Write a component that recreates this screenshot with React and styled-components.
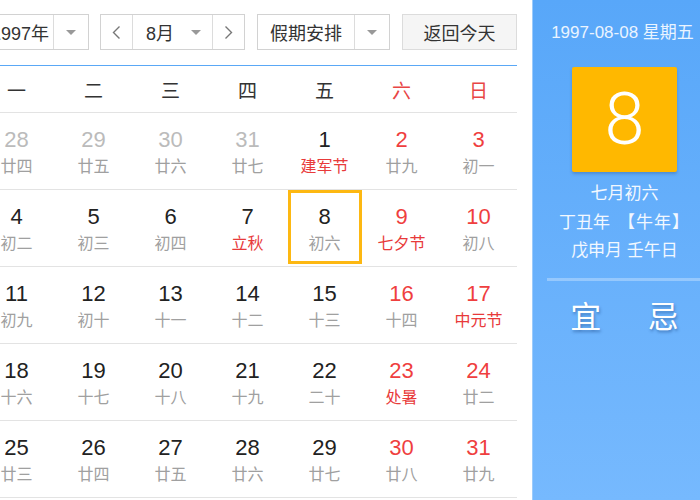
import React from 'react';
import styled, { createGlobalStyle } from 'styled-components';

const Global = createGlobalStyle`
  html, body {
    margin: 0;
    padding: 0;
    background: #fff;
    overflow: hidden;
  }
  body {
    font-family: "Liberation Sans", "Noto Sans CJK SC", sans-serif;
    color: #333;
  }
`

const Viewport = styled.div`
  width: 700px;
  height: 500px;
  overflow: hidden;
`

const Widget = styled.div`
  display: flex;
  align-items: stretch;
  margin-left: -22px;
  width: 760px;
  height: 500px;
`

const Main = styled.div`
  width: 539px;
  padding-top: 14px;
  flex-shrink: 0;
`

const Toolbar = styled.div`
  display: flex;
  height: 36px;
  margin-bottom: 15px;
`

const Select = styled.div`
  display: flex;
  width: ${p => p.w}px;
  margin-right: ${p => p.mr || 0}px;
  height: 36px;
  box-sizing: border-box;
  border: 1px solid #d2d2d2;
  background: #fff;
  font-size: 18px;
  color: #333;
`

const SelectText = styled.div`
  flex: 1;
  display: flex;
  align-items: center;
  justify-content: ${p => p.align || 'center'};
  padding-left: ${p => p.pl || 0}px;
  padding-right: ${p => p.pr || 0}px;
  white-space: nowrap;
`

const ArrowBox = styled.div`
  width: ${p => p.w}px;
  border-left: 1px solid #dcdcdc;
  display: flex;
  align-items: center;
  justify-content: center;
`

const Caret = styled.span`
  width: 0;
  height: 0;
  border-left: 5px solid transparent;
  border-right: 5px solid transparent;
  border-top: 5px solid #999;
`

const StepButton = styled.div`
  width: 31px;
  display: flex;
  align-items: center;
  justify-content: center;
  border-left: ${p => p.left ? '1px solid #dcdcdc' : 'none'};
  border-right: ${p => p.right ? '1px solid #dcdcdc' : 'none'};
`

const MonthText = styled.div`
  flex: 1;
  display: flex;
  align-items: center;
  justify-content: space-between;
  padding: 0 11px 0 13px;
`

const TodayButton = styled.div`
  width: 115px;
  height: 36px;
  box-sizing: border-box;
  border: 1px solid #dcdcdc;
  background: #f5f5f5;
  display: flex;
  align-items: center;
  justify-content: center;
  font-size: 18px;
  color: #333;
`

const Table = styled.div`
  border-top: 1px solid #5aa8f6;
`

const HeadRow = styled.div`
  display: grid;
  grid-template-columns: repeat(7, 1fr);
  height: 46px;
  border-bottom: 1px solid #e3e3e3;
`

const HeadCell = styled.div`
  display: flex;
  align-items: center;
  justify-content: center;
  font-size: 19px;
  color: ${p => p.weekend ? '#e84545' : '#333'};
`

const WeekRow = styled.div`
  display: grid;
  grid-template-columns: repeat(7, 1fr);
  height: 76px;
  border-bottom: 1px solid #e3e3e3;
`

const Cell = styled.div`
  display: flex;
  justify-content: center;
`

const DayBox = styled.div`
  width: 74px;
  height: 74px;
  box-sizing: border-box;
  border: 3px solid ${p => p.selected ? '#fdb812' : 'transparent'};
  display: flex;
  flex-direction: column;
  align-items: center;
  padding-top: 12px;
`

const DayNum = styled.div`
  font-size: 22px;
  line-height: 24px;
  color: ${p => p.tone};
`

const Lunar = styled.div`
  margin-top: 5px;
  font-size: 16px;
  line-height: 20px;
  color: ${p => p.red ? '#e83a3a' : '#a0a0a0'};
`

const Panel = styled.div`
  margin-left: 15px;
  width: 184px;
  flex-shrink: 0;
  box-sizing: border-box;
  border-left: 1px solid #9ccbfb;
  background: linear-gradient(180deg, #58a7f9 0%, #76b9fe 100%);
  display: flex;
  flex-direction: column;
  align-items: center;
  padding-top: 22px;
  color: #fff;
`

const DateLine = styled.div`
  font-size: 17px;
  line-height: 22px;
  color: #eaf4ff;
  white-space: nowrap;
  margin-left: -4px;
`

const BigDay = styled.div`
  margin-top: 23px;
  width: 105px;
  height: 105px;
  background: #ffb800;
  border-radius: 2px;
  box-shadow: 0 2px 3px rgba(40, 80, 140, 0.35);
  display: flex;
  align-items: center;
  justify-content: center;
  font-size: 72px;
  font-family: "Roboto", "Liberation Sans", sans-serif;
  font-weight: 300;
  color: #fff;
`

const LunarInfo = styled.div`
  margin-top: 8px;
  display: flex;
  flex-direction: column;
  align-items: center;
  font-size: 17px;
  line-height: 28.5px;
  color: #f2f8ff;
  white-space: nowrap;
`

const Zodiac = styled.span`
  margin-left: 8px;
  letter-spacing: 1px;
`

const Divider = styled.div`
  align-self: stretch;
  margin: 12px 14px 0;
  height: 3px;
  background: rgba(255, 255, 255, 0.3);
`

const Advice = styled.div`
  align-self: stretch;
  margin: 17px 14px 0;
  display: grid;
  grid-template-columns: 1fr 1fr;
`

const AdviceWord = styled.div`
  text-align: center;
  font-size: 31px;
  line-height: 40px;
  color: #fff;
  text-shadow: 1px 2px 3px rgba(20, 60, 120, 0.45);
`

const Chevron = ({ dir }) => (
  <svg width="9" height="15" viewBox="0 0 9 15">
    <polyline
      points={dir === 'left' ? '7.5,1.5 1.5,7.5 7.5,13.5' : '1.5,1.5 7.5,7.5 1.5,13.5'}
      fill="none"
      stroke="#777"
      strokeWidth="1.4"
    />
  </svg>
)

const weekdays = ['一', '二', '三', '四', '五', '六', '日']

// [day, lunar, festival?, otherMonth?]
const weeks = [
  [[28, '廿四', 0, 1], [29, '廿五', 0, 1], [30, '廿六', 0, 1], [31, '廿七', 0, 1], [1, '建军节', 1], [2, '廿九'], [3, '初一']],
  [[4, '初二'], [5, '初三'], [6, '初四'], [7, '立秋', 1], [8, '初六'], [9, '七夕节', 1], [10, '初八']],
  [[11, '初九'], [12, '初十'], [13, '十一'], [14, '十二'], [15, '十三'], [16, '十四'], [17, '中元节', 1]],
  [[18, '十六'], [19, '十七'], [20, '十八'], [21, '十九'], [22, '二十'], [23, '处暑', 1], [24, '廿二']],
  [[25, '廿三'], [26, '廿四'], [27, '廿五'], [28, '廿六'], [29, '廿七'], [30, '廿八'], [31, '廿九']],
]

const App = () => {
  return (
    <Viewport>
      <Global />
      <Widget>
        <Main>
          <Toolbar>
            <Select w={111} mr={11}>
              <SelectText align="flex-start" pl={12}>1997年</SelectText>
              <ArrowBox w={34}><Caret /></ArrowBox>
            </Select>
            <Select w={145} mr={12}>
              <StepButton right><Chevron dir="left" /></StepButton>
              <MonthText>8月<Caret /></MonthText>
              <StepButton left><Chevron dir="right" /></StepButton>
            </Select>
            <Select w={133} mr={12}>
              <SelectText>假期安排</SelectText>
              <ArrowBox w={34}><Caret /></ArrowBox>
            </Select>
            <TodayButton>返回今天</TodayButton>
          </Toolbar>
          <Table>
            <HeadRow>
              {weekdays.map((w, i) => (
                <HeadCell key={w} weekend={i > 4}>{w}</HeadCell>
              ))}
            </HeadRow>
            {weeks.map((week, r) => (
              <WeekRow key={r}>
                {week.map(([day, lunar, fest, other], c) => {
                  const tone = other ? '#bbbbbb' : c > 4 ? '#ef3f3f' : '#222'
                  return (
                    <Cell key={c}>
                      <DayBox selected={r === 1 && day === 8}>
                        <DayNum tone={tone}>{day}</DayNum>
                        <Lunar red={fest}>{lunar}</Lunar>
                      </DayBox>
                    </Cell>
                  )
                })}
              </WeekRow>
            ))}
          </Table>
        </Main>
        <Panel>
          <DateLine>1997-08-08 星期五</DateLine>
          <BigDay>8</BigDay>
          <LunarInfo>
            <span>七月初六</span>
            <span>丁丑年<Zodiac>【牛年】</Zodiac></span>
            <span>戊申月 壬午日</span>
          </LunarInfo>
          <Divider />
          <Advice>
            <AdviceWord>宜</AdviceWord>
            <AdviceWord>忌</AdviceWord>
          </Advice>
        </Panel>
      </Widget>
    </Viewport>
  )
}

export default App
